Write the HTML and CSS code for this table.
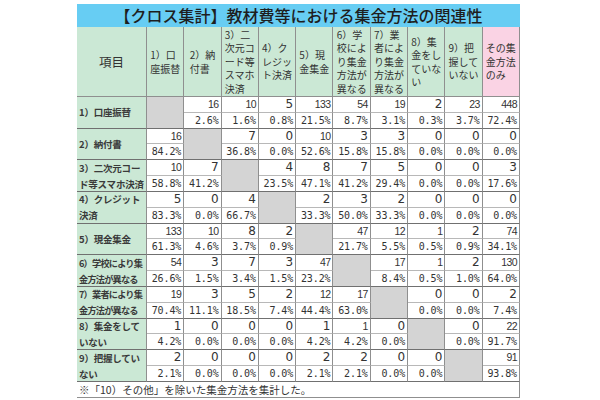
FILE: index.html
```html
<!DOCTYPE html>
<html lang="ja">
<head>
<meta charset="utf-8">
<link rel="stylesheet" href="styles.css">
</head>
<body>
<div class="wrap">
  <div class="title">【クロス集計】教材費等における集金方法の関連性</div>
  <div class="tbl">
    <div class="h h0">項目</div>
    <div class="h"><span>1）口<br>座振替</span></div>
    <div class="h"><span>2）納<br>付書</span></div>
    <div class="h"><span>3）二<br>次元コ<br>ード等<br>スマホ<br>決済</span></div>
    <div class="h"><span>4）ク<br>レジッ<br>ト決済</span></div>
    <div class="h"><span>5）現<br>金集金</span></div>
    <div class="h"><span>6）学<br>校によ<br>り集金<br>方法が<br>異なる</span></div>
    <div class="h"><span>7）業<br>者によ<br>り集金<br>方法が<br>異なる</span></div>
    <div class="h"><span>8）集<br>金をし<br>ていな<br>い</span></div>
    <div class="h"><span>9）把<br>握して<br>いない</span></div>
    <div class="h hp"><span>その集<br>金方法<br>のみ</span></div>

    <div class="rh">1）口座振替</div>
    <div class="x"></div>
    <div class="n">16</div><div class="n">10</div><div class="n b">5</div><div class="n">133</div><div class="n">54</div><div class="n">19</div><div class="n b">2</div><div class="n">23</div><div class="n">448</div>
    <div class="p">2.6%</div><div class="p">1.6%</div><div class="p">0.8%</div><div class="p">21.5%</div><div class="p">8.7%</div><div class="p">3.1%</div><div class="p">0.3%</div><div class="p">3.7%</div><div class="p">72.4%</div>

    <div class="rh">2）納付書</div>
    <div class="n">16</div>
    <div class="x"></div>
    <div class="n b">7</div><div class="n b">0</div><div class="n">10</div><div class="n b">3</div><div class="n b">3</div><div class="n b">0</div><div class="n b">0</div><div class="n b">0</div>
    <div class="p">84.2%</div>
    <div class="p">36.8%</div><div class="p">0.0%</div><div class="p">52.6%</div><div class="p">15.8%</div><div class="p">15.8%</div><div class="p">0.0%</div><div class="p">0.0%</div><div class="p">0.0%</div>

    <div class="rh">3）二次元コー<br>ド等スマホ決済</div>
    <div class="n">10</div><div class="n b">7</div>
    <div class="x"></div>
    <div class="n b">4</div><div class="n b">8</div><div class="n b">7</div><div class="n b">5</div><div class="n b">0</div><div class="n b">0</div><div class="n b">3</div>
    <div class="p">58.8%</div><div class="p">41.2%</div>
    <div class="p">23.5%</div><div class="p">47.1%</div><div class="p">41.2%</div><div class="p">29.4%</div><div class="p">0.0%</div><div class="p">0.0%</div><div class="p">17.6%</div>

    <div class="rh">4）クレジット<br>決済</div>
    <div class="n b">5</div><div class="n b">0</div><div class="n b">4</div>
    <div class="x"></div>
    <div class="n b">2</div><div class="n b">3</div><div class="n b">2</div><div class="n b">0</div><div class="n b">0</div><div class="n b">0</div>
    <div class="p">83.3%</div><div class="p">0.0%</div><div class="p">66.7%</div>
    <div class="p">33.3%</div><div class="p">50.0%</div><div class="p">33.3%</div><div class="p">0.0%</div><div class="p">0.0%</div><div class="p">0.0%</div>

    <div class="rh">5）現金集金</div>
    <div class="n">133</div><div class="n">10</div><div class="n b">8</div><div class="n b">2</div>
    <div class="x"></div>
    <div class="n">47</div><div class="n">12</div><div class="n">1</div><div class="n b">2</div><div class="n">74</div>
    <div class="p">61.3%</div><div class="p">4.6%</div><div class="p">3.7%</div><div class="p">0.9%</div>
    <div class="p">21.7%</div><div class="p">5.5%</div><div class="p">0.5%</div><div class="p">0.9%</div><div class="p">34.1%</div>

    <div class="rh tight">6）学校により集<br>金方法が異なる</div>
    <div class="n">54</div><div class="n b">3</div><div class="n b">7</div><div class="n b">3</div><div class="n">47</div>
    <div class="x"></div>
    <div class="n">17</div><div class="n">1</div><div class="n b">2</div><div class="n">130</div>
    <div class="p">26.6%</div><div class="p">1.5%</div><div class="p">3.4%</div><div class="p">1.5%</div><div class="p">23.2%</div>
    <div class="p">8.4%</div><div class="p">0.5%</div><div class="p">1.0%</div><div class="p">64.0%</div>

    <div class="rh tight">7）業者により集<br>金方法が異なる</div>
    <div class="n">19</div><div class="n b">3</div><div class="n b">5</div><div class="n b">2</div><div class="n">12</div><div class="n">17</div>
    <div class="x"></div>
    <div class="n b">0</div><div class="n b">0</div><div class="n b">2</div>
    <div class="p">70.4%</div><div class="p">11.1%</div><div class="p">18.5%</div><div class="p">7.4%</div><div class="p">44.4%</div><div class="p">63.0%</div>
    <div class="p">0.0%</div><div class="p">0.0%</div><div class="p">7.4%</div>

    <div class="rh">8）集金をして<br>いない</div>
    <div class="n b">1</div><div class="n b">0</div><div class="n b">0</div><div class="n b">0</div><div class="n b">1</div><div class="n">1</div><div class="n b">0</div>
    <div class="x"></div>
    <div class="n b">0</div><div class="n">22</div>
    <div class="p">4.2%</div><div class="p">0.0%</div><div class="p">0.0%</div><div class="p">0.0%</div><div class="p">4.2%</div><div class="p">4.2%</div><div class="p">0.0%</div>
    <div class="p">0.0%</div><div class="p">91.7%</div>

    <div class="rh">9）把握してい<br>ない</div>
    <div class="n b">2</div><div class="n b">0</div><div class="n b">0</div><div class="n b">0</div><div class="n b">2</div><div class="n b">2</div><div class="n b">0</div><div class="n b">0</div>
    <div class="x"></div>
    <div class="n">91</div>
    <div class="p">2.1%</div><div class="p">0.0%</div><div class="p">0.0%</div><div class="p">0.0%</div><div class="p">2.1%</div><div class="p">2.1%</div><div class="p">0.0%</div><div class="p">0.0%</div>
    <div class="p">93.8%</div>
  </div>
  <div class="note">※「10）その他」を除いた集金方法を集計した。</div>
</div>
</body>
</html>
```

FILE: styles.css
```css
html, body {
  margin: 0;
  padding: 0;
  background: #ffffff;
}
body {
  font-family: "Noto Sans CJK JP", "Noto Sans", sans-serif;
  color: #333333;
}
.wrap {
  width: 443px;
  margin: 4px 0 0 77px;
}
.title {
  height: 23px;
  background: #67cdf3;
  color: #1e1e1e;
  font-size: 16px;
  line-height: 23px;
  text-align: center;
  font-weight: 500;
}
.tbl {
  display: grid;
  grid-template-columns: 70px repeat(10, 1fr);
  grid-template-rows: 70px repeat(18, 15.83px);
}
.tbl > div {
  box-sizing: border-box;
  border-right: 1px solid #8f8f8f;
  border-bottom: 1px solid #8f8f8f;
  overflow: hidden;
}
.h {
  background: #cbe8d5;
  display: flex;
  align-items: center;
  justify-content: center;
  font-size: 10px;
  line-height: 13.5px;
  color: #333333;
}
.h span {
  text-align: left;
  white-space: nowrap;
}
.h0 {
  font-size: 12.5px;
}
.hp {
  background: #fad3e4;
}
.rh {
  grid-row: span 2;
  grid-column: 1;
  background: #cbe8d5;
  display: flex;
  align-items: center;
  padding-left: 2px;
  font-size: 9.5px;
  line-height: 16px;
  font-weight: 700;
  color: #3a3a3a;
  white-space: nowrap;
  letter-spacing: -0.2px;
  border-bottom-color: #707070 !important;
}
.rh.tight {
  font-size: 9.2px;
  letter-spacing: -0.8px;
}
.x {
  grid-row: span 2;
  background: #d4d4d4;
  border-bottom-color: #707070 !important;
}
.n, .p {
  text-align: right;
  padding-right: 2px;
  color: #333333;
  white-space: nowrap;
}
.n {
  font-family: "Liberation Sans", sans-serif;
  font-size: 10.5px;
  line-height: 15px;
  letter-spacing: -0.6px;
  border-bottom-color: #b8b8b8 !important;
}
.n.b {
  font-family: "DejaVu Sans", sans-serif;
  font-size: 12px;
  letter-spacing: 0;
}
.p {
  font-family: "DejaVu Sans Mono", monospace;
  font-size: 10px;
  line-height: 15px;
  letter-spacing: -0.1px;
  border-bottom-color: #707070 !important;
}
.note {
  height: 16px;
  box-sizing: border-box;
  border-right: 1px solid #8f8f8f;
  border-bottom: 1px solid #8f8f8f;
  font-size: 10.5px;
  line-height: 15px;
  padding-left: 2px;
  color: #333333;
}
```
